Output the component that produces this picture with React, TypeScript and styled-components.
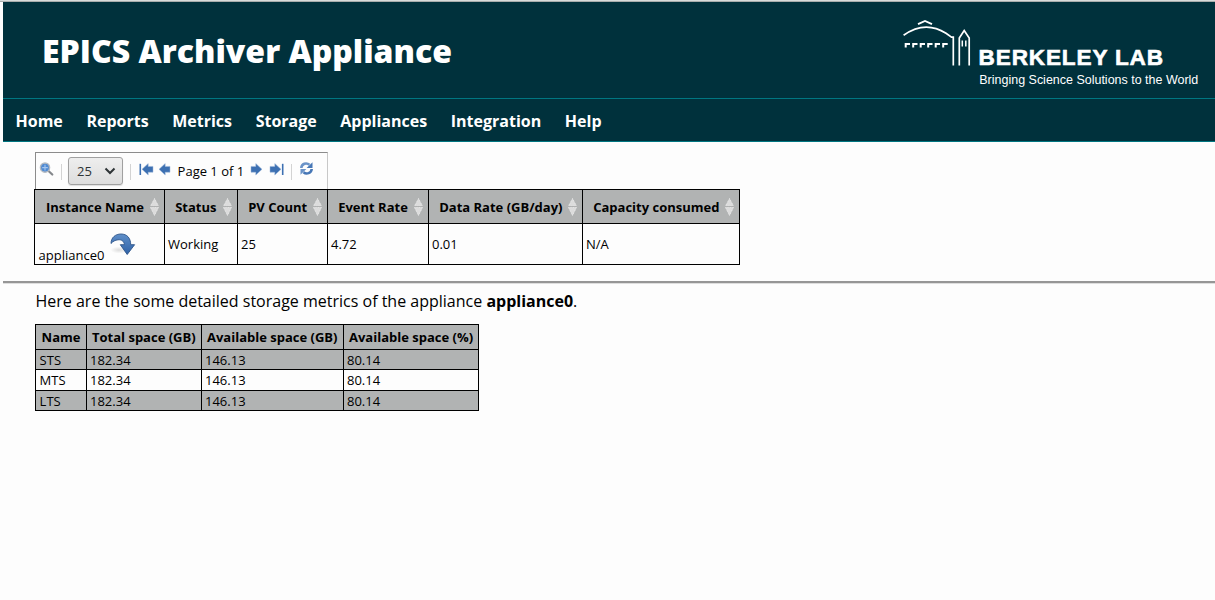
import React from "react";
import styled, { createGlobalStyle } from "styled-components";

const GlobalStyle = createGlobalStyle`
  * { box-sizing: border-box; }
  body { margin: 0; background: #fdfdfd; color: #000; font-family: "Open Sans", "Noto Sans", sans-serif; }
`;

const Page = styled.div`
  height: 600px;
  overflow: hidden;
  border-top: 1px solid #d8dbda;
`;
const Frame = styled.div`
  border-top: 1px solid #a9adac;
`;
const Body = styled.div`
  margin-left: 3px;
`;
const Header = styled.header`
  height: 97px;
  background: #00313c;
  border-bottom: 1px solid #007681;
  display: flex;
  justify-content: space-between;
  padding: 0 16px 0 39px;
`;
const Title = styled.h1`
  margin: 0;
  font-size: 32px;
  font-weight: 800;
  line-height: 44px;
  padding-top: 27px;
  color: #fff;
  white-space: nowrap;
`;
const Logo = styled.div`
  display: flex;
  width: 296px;
  padding-top: 17px;
  color: #fff;
`;
const LogoWords = styled.div`
  padding: 22px 0 0 6px;
`;
const Wordmark = styled.svg`
  display: block;
  overflow: visible;
`;
const Nav = styled.nav`
  height: 43px;
  background: #00313c;
  border-bottom: 1px solid #007681;
  display: flex;
  gap: 23.6px;
  padding-left: 12.5px;
`;
const NavItem = styled.a`
  color: #fff;
  font-size: 16px;
  font-weight: 700;
  line-height: 44px;
  white-space: nowrap;
`;
const Content = styled.main`
  padding: 10px 0 0 31px;
`;
const Pager = styled.div`
  margin-left: 1px;
  width: 293px;
  height: 37px;
  border-top: 1px solid #8c8c8c;
  border-left: 1px solid #8c8c8c;
  border-right: 1px solid #c8c8c8;
  display: flex;
  align-items: flex-start;
  font-size: 13px;
`;
const Icon = styled.svg<{ $left: number; $top: number }>`
  flex: none;
  overflow: visible;
  margin: ${(p) => p.$top}px 0 0 ${(p) => p.$left}px;
`;
const Separator = styled.span<{ $left: number }>`
  width: 1px;
  height: 16px;
  margin: 11px 0 0 ${(p) => p.$left}px;
  background: #d3d3d3;
`;
const PageSize = styled.button`
  width: 55px;
  height: 28px;
  margin: 4px 0 0 6px;
  padding: 0 6px 0 8px;
  display: flex;
  align-items: center;
  justify-content: space-between;
  border: 1px solid #a0a0a0;
  border-radius: 3px;
  background: linear-gradient(#eeeeee, #dddddd);
  box-shadow: 0 1px 1px rgba(0, 0, 0, 0.12);
  font: 13px "Open Sans", sans-serif;
  color: #2e3436;
`;
const PageLabel = styled.span`
  width: 67.4px;
  margin: 9px 0 0 7.6px;
  line-height: 18px;
  white-space: nowrap;
`;
const Table = styled.table<{ $width: number }>`
  width: ${(p) => p.$width}px;
  table-layout: fixed;
  border-collapse: separate;
  border-spacing: 0;
  border-top: 1px solid #000;
  border-left: 1px solid #000;
  font-size: 13px;
  line-height: 18px;
`;
const HeadCell = styled.th<{ $width: number; $height: number; $sortable?: boolean }>`
  width: ${(p) => p.$width}px;
  height: ${(p) => p.$height}px;
  padding: ${(p) => (p.$sortable ? "0 5px 0 10.2px" : "0 0 0 5px")};
  background: #b1b3b3;
  border-right: 1px solid #000;
  border-bottom: 1px solid #000;
  text-align: left;
  font-weight: 700;
  white-space: nowrap;
  &:first-child { padding-left: ${(p) => (p.$sortable ? "11px" : "5.6px")}; }
`;
const HeadInner = styled.div`
  display: flex;
  align-items: center;
  justify-content: space-between;
`;
const Cell = styled.td<{ $height: number; $shaded?: boolean }>`
  height: ${(p) => p.$height}px;
  padding: 0 0 0 3px;
  background: ${(p) => (p.$shaded ? "#b1b3b3" : "#fdfdfd")};
  border-right: 1px solid #000;
  border-bottom: 1px solid #000;
  white-space: nowrap;
  &:first-child { padding-left: 3.6px; }
`;
const InstanceLink = styled.div`
  display: flex;
  align-items: flex-end;
  height: 40px;
`;
const Rule = styled.hr`
  margin: 16px 0 0;
  height: 3px;
  border: 0;
  border-top: 2px solid #969696;
  border-bottom: 1px solid #dedede;
`;
const Details = styled.section`
  padding-left: 32px;
`;
const Intro = styled.p`
  margin: 6px 0 12px;
  padding-left: 0.5px;
  font-size: 16px;
  line-height: 22px;
  white-space: nowrap;
`;
const DrillSvg = styled.svg`
  margin: 0 0 8px 6px;
`;

const Building = () => (
  <svg width="70" height="50" viewBox="0 0 70 50" fill="none" stroke="#fff" strokeWidth="1.7">
    <path d="M15 5.2 L22 2 L29 5.2" strokeWidth="1.9" />
    <path d="M.6 16.3 Q22 1 43 14.3 L48.5 18.2 H50.3 V46.5" />
    <path d="M56.3 46.5 V19 L61.2 11.5 L66.2 19 V46.5" />
    <path d="M59.3 21.5 V27.5 M62.8 21.5 V27.5" strokeWidth="1.5" />
    <path d="M2.7 28.4 V25 H7 M10.2 28.4 V25 H14.5 M17.7 28.4 V25 H22 M25.2 28.4 V25 H29.5 M32.7 28.4 V25 H37 M40.2 28.4 V25 H44.7" strokeWidth="2" />
  </svg>
);

const BerkeleyLogo = () => (
  <Logo>
    <Building />
    <LogoWords>
      <Wordmark width="220" height="48">
        <text x="-.4" y="24.3" fill="#fff" stroke="#fff" strokeWidth=".6" fontFamily="Liberation Sans, sans-serif" fontWeight="700" fontSize="22.6" textLength="184.5" lengthAdjust="spacing">BERKELEY LAB</text>
        <text x=".3" y="43" fill="#fff" fontFamily="Liberation Sans, sans-serif" fontSize="12" textLength="219" lengthAdjust="spacingAndGlyphs">Bringing Science Solutions to the World</text>
      </Wordmark>
    </LogoWords>
  </Logo>
);

const SortIcon = () => (
  <svg width="9" height="18" viewBox="0 0 9 18">
    <path d="M4.5 .5 L8.7 8.3 H.3Z M4.5 17.5 L8.7 9.3 H.3Z" fill="#dcdcdc" stroke="#f2f2f2" strokeWidth=".7" strokeDasharray="1 .7" />
    <path d="M0 8.5 H9" stroke="#a8a9a9" strokeWidth=".8" />
  </svg>
);

const ArrowIcon = ({ flip, bar, left }: { flip?: boolean; bar?: boolean; left: number }) => (
  <Icon $left={left} $top={10} width={bar ? 14 : 11} height="13" viewBox={bar ? "0 0 14 13" : "0 0 11 13"}>
    <g transform={flip ? `translate(${bar ? 14 : 11} 0) scale(-1 1)` : undefined}>
      <path d="M0 3.4 H4.8 V.6 L11 6.3 L4.8 12 V9.2 H0Z" fill="#3d70b2" stroke="#9db7d9" strokeWidth=".5" />
      {bar && <path d="M12.7 .8 V12" stroke="#3d70b2" strokeWidth="1.6" />}
    </g>
  </Icon>
);

const DrillIcon = () => (
  <DrillSvg width="26" height="24" viewBox="0 0 26 24">
    <defs>
      <linearGradient id="drill" x1="0" y1="0" x2="0" y2="1">
        <stop offset="0" stopColor="#5f8fc9" />
        <stop offset="1" stopColor="#2f61a6" />
      </linearGradient>
      <radialGradient id="shade">
        <stop offset="0" stopColor="#dcdcdc" />
        <stop offset="1" stopColor="#fdfdfd" />
      </radialGradient>
    </defs>
    <ellipse cx="9" cy="18" rx="8.5" ry="3.4" fill="url(#shade)" />
    <path d="M1 11.5 C1 5.5 5.5 2 11 2 C17 2 20.7 6 20.7 12.7 H24.6 L17.2 22.5 L10.3 12.7 H14.4 C14.2 9.5 11.5 7.3 8 7.8 C5 8.2 3 9.3 1 11.5Z" fill="url(#drill)" stroke="#2c5389" strokeWidth=".9" />
  </DrillSvg>
);

const metricColumns: [string, number][] = [
  ["Instance Name", 130],
  ["Status", 73],
  ["PV Count", 90],
  ["Event Rate", 101],
  ["Data Rate (GB/day)", 154],
  ["Capacity consumed", 157],
];
const metricValues = ["Working", "25", "4.72", "0.01", "N/A"];
const storageColumns: [string, number][] = [
  ["Name", 51],
  ["Total space (GB)", 115],
  ["Available space (GB)", 142],
  ["Available space (%)", 135],
];
const storageRows = [
  { height: 20, values: ["STS", "182.34", "146.13", "80.14"] },
  { height: 21, values: ["MTS", "182.34", "146.13", "80.14"] },
  { height: 20, values: ["LTS", "182.34", "146.13", "80.14"] },
];

export default function App() {
  return (
    <Page>
      <GlobalStyle />
      <Frame>
        <Body>
          <Header>
            <Title>EPICS Archiver Appliance</Title>
            <BerkeleyLogo />
          </Header>
          <Nav>
            {["Home", "Reports", "Metrics", "Storage", "Appliances", "Integration", "Help"].map((n) => (
              <NavItem key={n}>{n}</NavItem>
            ))}
          </Nav>
          <Content>
            <Pager>
              <Icon $left={4} $top={9} width="14" height="15" viewBox="0 0 14 15">
                <path d="M8.5 9 L12.3 12.5" stroke="#85888c" strokeWidth="2.2" strokeLinecap="round" />
                <circle cx="5" cy="5.6" r="4.6" fill="#4f8ad2" stroke="#b4b9c0" strokeWidth="1.4" />
                <path d="M5 2.8 V8.4 M2.2 5.6 H7.8" stroke="#a5c6ee" strokeWidth="1.1" />
              </Icon>
              <Separator $left={7} />
              <PageSize>
                <span>25</span>
                <svg width="12" height="8" viewBox="0 0 12 8" fill="none" stroke="#2e3436" strokeWidth="2">
                  <path d="M1.5 1.5 L6 6 L10.5 1.5" />
                </svg>
              </PageSize>
              <Separator $left={7} />
              <ArrowIcon flip bar left={8} />
              <ArrowIcon flip left={6} />
              <PageLabel>Page 1 of 1</PageLabel>
              <ArrowIcon left={6} />
              <ArrowIcon bar left={8} />
              <Separator $left={7} />
              <Icon $left={8} $top={9} width="13" height="13" viewBox="0 0 13 13">
                <path d="M1.3 6 C1.6 1.6 6.5 .2 9.5 2.8" fill="none" stroke="#6a93c8" strokeWidth="2.6" />
                <path d="M12.5 .2 V6 H6.6Z" fill="#4777b6" />
                <path d="M11.7 7 C11.4 11.2 6.5 12.8 3.5 10.2" fill="none" stroke="#4777b6" strokeWidth="2.6" />
                <path d="M.5 12.7 V7 H6.4Z" fill="#6a93c8" />
              </Icon>
            </Pager>
            <Table $width={706}>
              <thead>
                <tr>
                  {metricColumns.map(([label, w]) => (
                    <HeadCell key={label} $width={w} $height={34} $sortable>
                      <HeadInner>
                        {label}
                        <SortIcon />
                      </HeadInner>
                    </HeadCell>
                  ))}
                </tr>
              </thead>
              <tbody>
                <tr>
                  <Cell $height={41}>
                    <InstanceLink>
                      appliance0
                      <DrillIcon />
                    </InstanceLink>
                  </Cell>
                  {metricValues.map((v) => (
                    <Cell key={v} $height={41}>{v}</Cell>
                  ))}
                </tr>
              </tbody>
            </Table>
          </Content>
          <Rule />
          <Details>
            <Intro>
              Here are the some detailed storage metrics of the appliance <b>appliance0</b>.
            </Intro>
            <Table $width={444}>
              <thead>
                <tr>
                  {storageColumns.map(([label, w]) => (
                    <HeadCell key={label} $width={w} $height={25}>{label}</HeadCell>
                  ))}
                </tr>
              </thead>
              <tbody>
                {storageRows.map((row, i) => (
                  <tr key={row.values[0]}>
                    {row.values.map((v, c) => (
                      <Cell key={c} $height={row.height} $shaded={i % 2 === 0}>{v}</Cell>
                    ))}
                  </tr>
                ))}
              </tbody>
            </Table>
          </Details>
        </Body>
      </Frame>
    </Page>
  );
}
